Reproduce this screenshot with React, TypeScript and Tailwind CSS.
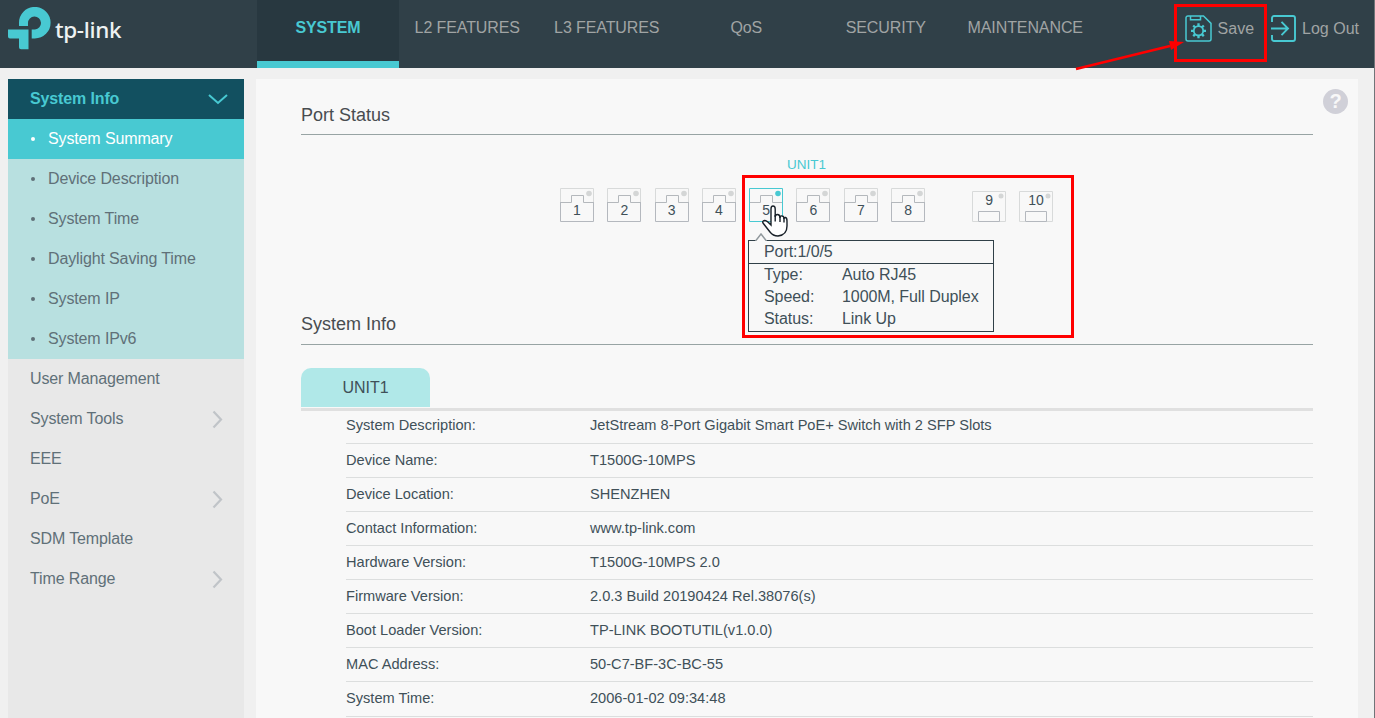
const navItems = [
  { label: "SYSTEM", active: true },
  { label: "L2 FEATURES" },
  { label: "L3 FEATURES" },
  { label: "QoS" },
  { label: "SECURITY" },
  { label: "MAINTENANCE" },
];

const subItems = [
  "System Summary",
  "Device Description",
  "System Time",
  "Daylight Saving Time",
  "System IP",
  "System IPv6",
];

const menuItems = [
  { label: "User Management" },
  { label: "System Tools", expandable: true },
  { label: "EEE" },
  { label: "PoE", expandable: true },
  { label: "SDM Template" },
  { label: "Time Range", expandable: true },
];

const infoRows = [
  ["System Description:", "JetStream 8-Port Gigabit Smart PoE+ Switch with 2 SFP Slots"],
  ["Device Name:", "T1500G-10MPS"],
  ["Device Location:", "SHENZHEN"],
  ["Contact Information:", "www.tp-link.com"],
  ["Hardware Version:", "T1500G-10MPS 2.0"],
  ["Firmware Version:", "2.0.3 Build 20190424 Rel.38076(s)"],
  ["Boot Loader Version:", "TP-LINK BOOTUTIL(v1.0.0)"],
  ["MAC Address:", "50-C7-BF-3C-BC-55"],
  ["System Time:", "2006-01-02 09:34:48"],
];

function Logo() {
  return (
    <div className="flex w-[257px] shrink-0 pl-2 pt-[7px]">
      <svg width="43" height="43" viewBox="0 0 43 43" fill="#48c9d2">
        <path d="M11 19V16A15.8 15.8 0 1 1 26.8 31.500H23.700V22.500H27A6.500 6.500 0 1 0 20 16V19Z" />
        <path d="M0 22.5H20.5V42.2H13Q11 42.2 11 40.2V31.5H2Q0 31.5 0 29.5Z" />
      </svg>
      <span className="ml-1 mt-[8px] font-['Noto_Sans',sans-serif] text-[22.5px] font-medium leading-[30px] tracking-[-0.35px] text-[#eef2f2]">
        tp-link
      </span>
    </div>
  );
}

function SaveIcon() {
  return (
    <svg width="27" height="27" viewBox="0 0 27 27" fill="none" stroke="#48c9d2" strokeWidth="1.5">
      <path d="M3 .9H18.5L26 8.4V24a2 2 0 0 1-2 2H3a2 2 0 0 1-2-2V3A2 2 0 0 1 3 .9Z" />
      <path d="M5.5 1V4.7H15.5V1" />
      <circle cx="13.5" cy="15.8" r="4.7" strokeWidth="1.8" />
      <path
        d="M13.5 11.2V8.3M13.5 20.4v2.9M8.9 15.8H6M18.1 15.8H21M10.2 12.5 8.2 10.5M16.8 19.1l2 2M10.2 19.1l-2 2M16.8 12.5l2-2"
        strokeWidth="2.3"
      />
    </svg>
  );
}

function LogoutIcon() {
  return (
    <svg width="25" height="27" viewBox="0 0 25 27" fill="none" stroke="#48c9d2" strokeWidth="1.9">
      <path d="M1 7V3a2 2 0 0 1 2-2H22a2 2 0 0 1 2 2V24a2 2 0 0 1-2 2H3a2 2 0 0 1-2-2V20" />
      <path d="M0 13.5H17M10.5 6.8 17 13.5 10.5 20.2" />
    </svg>
  );
}

function Header() {
  return (
    <header className="flex h-[68px] bg-[#304048] text-base text-[#a0a4a4]">
      <Logo />
      <nav className="flex">
        {navItems.map((item) =>
          item.active ? (
            <div
              key={item.label}
              className="-mr-[1.5px] h-[68px] w-[142px] border-b-[7px] border-[#48c9d2] bg-[#283840] text-center font-bold leading-[55px] tracking-[-0.1px] text-[#48c9d2]"
            >
              {item.label}
            </div>
          ) : (
            <div key={item.label} className="w-[139.5px] text-center leading-[55px] tracking-[-0.1px]">
              {item.label}
            </div>
          )
        )}
      </nav>
      <div className="ml-auto flex gap-[17px] pr-[15px] pt-[15px]">
        <div className="relative flex gap-1.5 leading-[27px]">
          <SaveIcon />
          Save
          <div className="absolute -left-[11px] -top-[11px] h-[58px] w-[93px] border-[3px] border-[#ff0000]" />
          <svg className="absolute -left-[110px] top-6" width="112" height="32" fill="#ff0000">
            <path d="M1 30 95 7" stroke="#ff0000" strokeWidth="2.5" />
            <path d="M109 3 94 2 96 11Z" />
          </svg>
        </div>
        <div className="flex gap-1.5 leading-[27px]">
          <LogoutIcon />
          Log Out
        </div>
      </div>
    </header>
  );
}

function Sidebar() {
  return (
    <aside className="w-[236px] shrink-0 bg-[#e8e8e8] text-base leading-[39px] tracking-[-0.13px] text-[#607078]">
      <div className="flex h-10 items-center justify-between bg-[#125060] pl-[22px] pr-4 font-bold text-[#48c9d2]">
        <span className="h-10">System Info</span>
        <svg width="20" height="11" fill="none" stroke="#48c9d2" strokeWidth="2">
          <path d="M1 1 10 9 19 1" />
        </svg>
      </div>
      <ul className="bg-[#b8e0e0]">
        {subItems.map((label, i) => (
          <li
            key={label}
            className={`flex h-10 items-center pl-[23px] ${i === 0 ? "bg-[#48c9d2] text-white" : ""}`}
          >
            <span className="mr-[13px] size-1 rounded-full bg-current" />
            <span className="h-10">{label}</span>
          </li>
        ))}
      </ul>
      <ul>
        {menuItems.map((item) => (
          <li key={item.label} className="flex h-10 items-center justify-between pl-[22px] pr-[21px]">
            <span className="h-10">{item.label}</span>
            {item.expandable && (
              <svg width="11" height="19" fill="none" stroke="#c0c4c8" strokeWidth="2.2">
                <path d="M1.5 1.5 9 9.5 1.5 17.5" />
              </svg>
            )}
          </li>
        ))}
      </ul>
    </aside>
  );
}

function Port({ id, up }: { id: number; up?: boolean }) {
  return (
    <div className="relative h-[34px] w-[34px] text-center text-[14px] leading-[44px] text-[#405058]">
      <svg className="absolute inset-0" width="34" height="34" fill="none">
        <path d="M.5 14V.5H33.5V14" stroke={up ? "#48c9d2" : "#d8dada"} />
        <path d="M.5 14V33.5H33.5V14" stroke={up ? "#48c9d2" : "#b4b8be"} />
        <path d="M1 14.5H11.5V7.5H23.5V14.5H33" stroke="#b4b8bc" />
        <circle cx="29" cy="5.5" r="2.8" fill={up ? "#48c9d2" : "#d4d6d6"} />
      </svg>
      <span className="relative">{id}</span>
    </div>
  );
}

function SfpPort({ id }: { id: number }) {
  return (
    <div className="relative h-[31px] w-[34px] text-center text-[14px] leading-[18px] text-[#405058]">
      <svg className="absolute inset-0" width="34" height="31" fill="none">
        <path d="M.5 .5H33.5V30.5H.5Z" stroke="#d8dada" />
        <path d="M6.5 30V20.5H27.5V30.5H6.5" stroke="#b4b8be" />
        <circle cx="29" cy="5" r="2.5" fill="#d4d6d6" />
      </svg>
      <span className="relative">{id}</span>
    </div>
  );
}

function PortTooltip() {
  return (
    <div className="absolute left-[188px] top-[52px] w-[246px] border border-[#304048] bg-[#f8f8f8] text-base leading-[22px] tracking-[-0.07px] text-[#405058]">
      <svg className="absolute -top-[8px] left-1.5" width="12" height="8" fill="#f8f8f8" stroke="#90989c" strokeWidth="1.5">
        <path d="M.5 8 6 1 11.5 8" />
      </svg>
      <div className="h-[23px] border-b border-[#304048] pl-[15px]">Port:1/0/5</div>
      <dl className="grid h-[67px] grid-cols-[78px_1fr] content-start pl-[15px]">
        <dt>Type:</dt>
        <dd>Auto RJ45</dd>
        <dt>Speed:</dt>
        <dd className="whitespace-nowrap">1000M, Full Duplex</dd>
        <dt>Status:</dt>
        <dd>Link Up</dd>
      </dl>
    </div>
  );
}

function HandCursor() {
  return (
    <svg className="absolute left-[202px] top-[17px]" width="27" height="33" fill="#fff" stroke="#182028" strokeWidth="1.4">
      <path d="M9 20V4Q9 1 11 1Q13.200 1 13.200 4V12Q13.200 9.500 15.500 9.500Q18 9.500 18 13Q18 10.500 20 11Q22 11 22 14Q22 12 23.500 12.500Q25 13 25 16V21Q25 30 16 31Q11 31 8 27L1 18Q0 16 2.500 15.500Q5 15.500 9 20Z" />
      <path d="M13.200 10V16.500M18 12V17M22 13V17.500" />
    </svg>
  );
}

function PortPanel() {
  return (
    <div className="relative ml-[259px] mt-[13px] flex h-[34px] items-end">
      <div className="flex gap-[13.3px]">
        {[1, 2, 3, 4, 5, 6, 7, 8].map((id) => (
          <Port key={id} id={id} up={id === 5} />
        ))}
      </div>
      <div className="ml-[47px] flex gap-[13px]">
        <SfpPort id={9} />
        <SfpPort id={10} />
      </div>
      <PortTooltip />
      <HandCursor />
      <div className="absolute -top-[13px] left-[182px] h-[163px] w-[332px] border-[3px] border-[#ff0000]" />
    </div>
  );
}

export default function App() {
  return (
    <div className="h-[718px] w-[1375px] overflow-hidden border-r border-[#707478] bg-[#f0f0f0] font-['Liberation_Sans',Arial,sans-serif]">
      <Header />
      <div className="flex h-[650px] gap-3 pl-2 pr-4 pt-[11px]">
        <Sidebar />
        <main className="relative min-w-0 flex-1 bg-[#f8f8f8] pl-[45px] pr-[45px]">
          <div className="absolute right-[10px] top-[10px] size-[25px] rounded-full bg-[#d0d0d8] text-center text-xl leading-[25px] font-bold text-[#f8f8f8]">
            ?
          </div>
          <h2 className="h-14 border-b border-[#98a4a4] pt-[22px] text-lg leading-7 text-[#484c50]">Port Status</h2>
          <div className="ml-[486px] mt-5 text-[13.5px] leading-5 text-[#48c9d2]">UNIT1</div>
          <PortPanel />
          <h2 className="mt-[88px] h-[35px] border-b border-[#98a4a4] text-lg leading-7 text-[#484c50]">System Info</h2>
          <div className="mt-[23px] border-b-[3px] border-[#e0e0e0] pb-px">
            <div className="h-[39px] w-[129px] rounded-t-[10px] bg-[#b0e8e8] text-center text-base leading-[39px] text-[#405058]">
              UNIT1
            </div>
          </div>
          <div className="pl-[45px] text-[14.6px] text-[#405058]">
            {infoRows.map(([label, value], i) => (
              <div
                key={label}
                className={`grid grid-cols-[244px_1fr] border-b border-[#dcdede] last:h-[35px] ${i === 0 ? "h-[33px] leading-[29px]" : "h-[34px] leading-[33px]"}`}
              >
                <span>{label}</span>
                <span>{value}</span>
              </div>
            ))}
          </div>
        </main>
      </div>
    </div>
  );
}
